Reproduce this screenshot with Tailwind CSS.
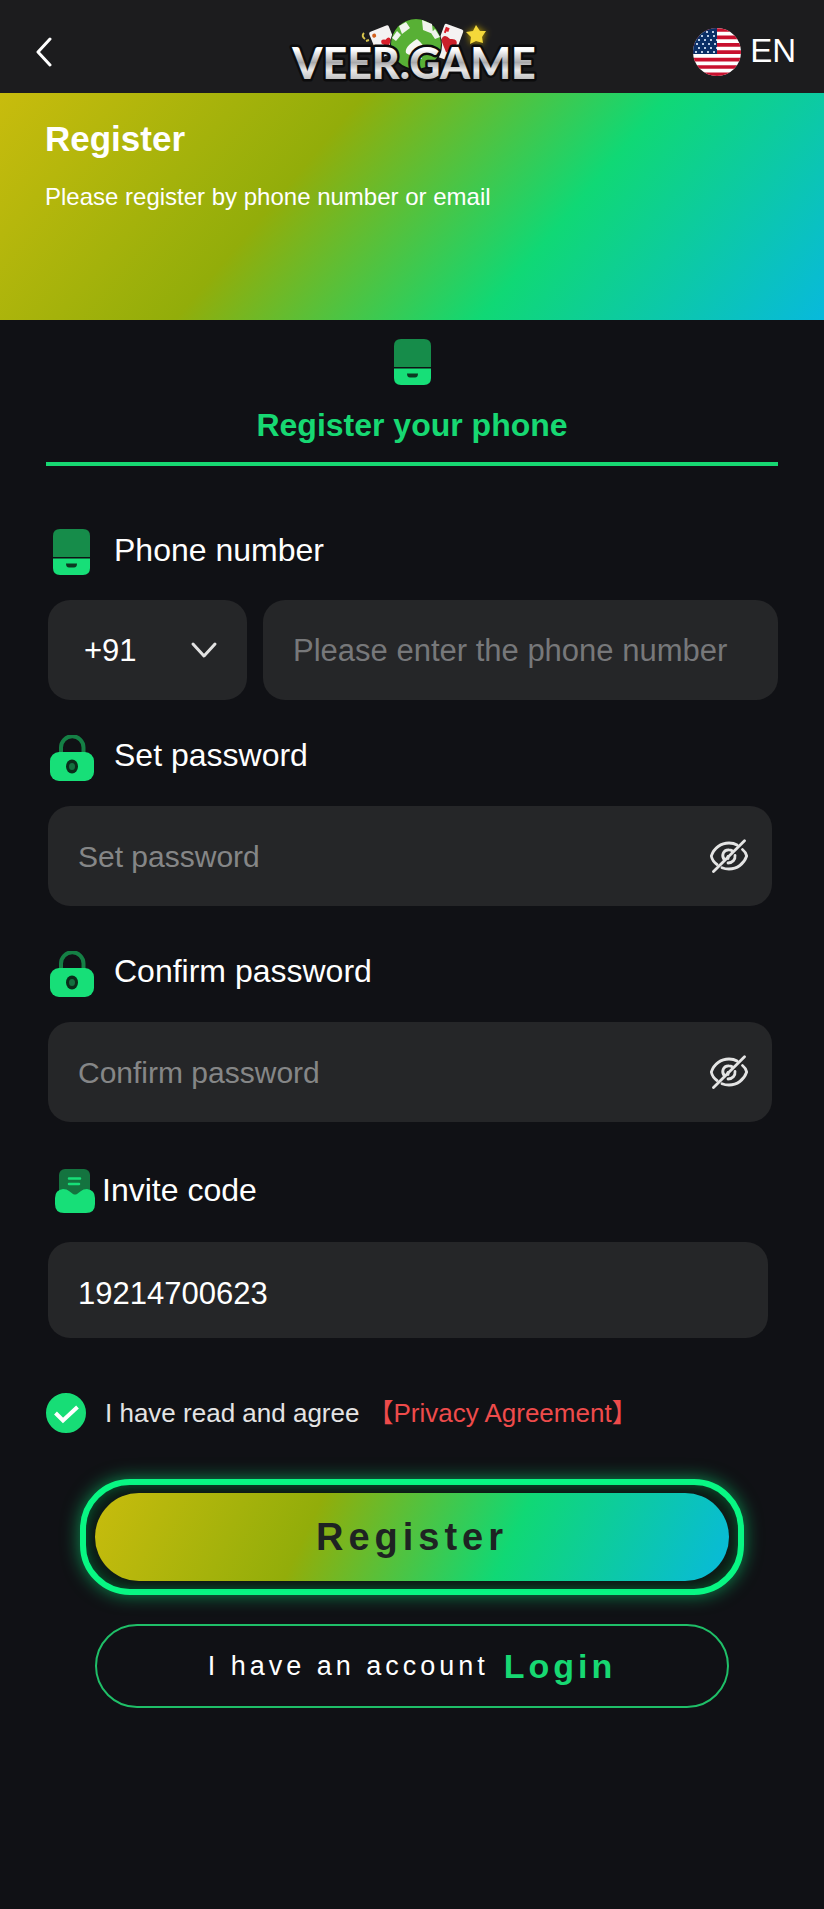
<!DOCTYPE html>
<html lang="en">
<head>
    <meta charset="UTF-8">
    <meta name="viewport" content="width=device-width, initial-scale=1">
    <title>Register - VEER.GAME</title>
    <script src="https://cdn.jsdelivr.net/npm/@tailwindcss/browser@4"></script>
</head>
<body class="min-h-screen bg-[#101115] text-white font-['Liberation_Sans',Arial,sans-serif]">
    <!-- Shared icons -->
    <svg class="hidden">
        <symbol id="icon-phone" viewBox="0 0 37 46">
            <path d="M7 0H30Q37 0 37 7V28H0V7Q0 0 7 0Z" fill="#168c4a"/>
            <path d="M0 29.500H37V39Q37 46 30 46H7Q0 46 0 39Z" fill="#17df78"/>
            <path d="M13 34.500H24Q24 38.500 21 38.500H16Q13 38.500 13 34.500Z" fill="#0c3a22"/>
        </symbol>
        <symbol id="icon-lock" viewBox="0 0 44 46">
            <path d="M11 18V12.500A11 11 0 0 1 33.500 12.500V18" fill="none" stroke="#158045" stroke-width="4"/>
            <rect y="17" width="44" height="29" rx="9" fill="#17df78"/>
            <ellipse cx="22" cy="31.500" rx="6" ry="7" fill="#0a2c1a"/>
            <ellipse cx="22" cy="31.500" rx="3" ry="3.500" fill="#14703f"/>
        </symbol>
        <symbol id="icon-invite" viewBox="0 0 40 44">
            <rect x="4" width="31" height="34" rx="6" fill="#14733f"/>
            <path d="M8 20Q12 20 14 22L18 25Q20 26 22 25L26 22Q28 20 32 20Q40 21 40 29V35Q40 44 31 44H9Q0 44 0 35V29Q0 21 8 20Z" fill="#17df78"/>
            <path d="M14 9.500H25M14 15H24" stroke="#17df78" stroke-width="2.500" stroke-linecap="round"/>
        </symbol>
        <symbol id="icon-eye-off" viewBox="0 0 38 34">
            <g fill="none" stroke="#e4e4e4" stroke-width="2.800" stroke-linecap="round">
                <path d="M7 25.500C4 23.500 2 20.500 1.300 17C4 9 11 4 19 4C22 4 25 4.700 27 6"/>
                <path d="M32.500 10.500C34.500 12 36 14.500 36.700 17C34 25 27 30 19 30C16.500 30 14 29.500 12 28.700"/>
                <path d="M14.500 21C11 17 13 10.500 19 10.800C20.500 10.800 21.500 11.300 22.500 12"/>
                <path d="M25 16.500C25.500 20.500 22.500 24 18 24"/>
                <path d="M18 17.500V19.500"/>
                <path d="M3.500 32.500L34.500 1.800"/>
            </g>
        </symbol>
    </svg>

    <header class="flex h-[93px] items-center justify-between bg-[#1c1c1e] pt-[10px] pr-7 pl-8">
        <div class="flex flex-1">
            <button type="button" aria-label="Back" class="p-1">
                <svg class="h-8 w-4" viewBox="0 0 16 32" fill="none" stroke="#fff" stroke-width="3" stroke-linecap="round" stroke-linejoin="round">
                    <path d="M14 3L2 16L14 29"/>
                </svg>
            </button>
        </div>
        <svg class="h-[76px] w-[270px] self-end" viewBox="-10 -4 270 76" role="img" aria-label="VEER.GAME">
            <defs>
                <linearGradient id="silver" x1="0" y1="0" x2="0" y2="1">
                    <stop offset="0.250" stop-color="#fff"/>
                    <stop offset="0.500" stop-color="#a9a9ab"/>
                    <stop offset="0.650" stop-color="#e9e9e9"/>
                    <stop offset="0.850" stop-color="#bdbdbd"/>
                </linearGradient>
                <filter id="glow" x="-1" y="-1" width="3" height="3"><feGaussianBlur stdDeviation="3"/></filter>
            </defs>
            <!-- Playing cards -->
            <g transform="rotate(-22 93 18)">
                <rect x="83" y="7" width="21" height="28" rx="2" fill="#f4f2f2"/>
                <circle cx="87" cy="12" r="2" fill="#d2601e"/>
                <path d="M96 28L91 22Q91 17 96 20Q101 17 101 22Z" fill="#d81f2a"/>
            </g>
            <g transform="rotate(20 161 18)">
                <rect x="151" y="5" width="20" height="34" rx="2" fill="#f4f2f2"/>
                <path d="M154 8v6M156 8v4" stroke="#d81f2a" stroke-width="2"/>
                <path d="M162 32L153 22Q153 14 161 18Q169 14 169 22Z" fill="#c9202a"/>
            </g>
            <!-- Poker chip -->
            <circle cx="127" cy="24" r="26" fill="#101210"/>
            <circle cx="127" cy="23" r="25" fill="#58b035"/>
            <path d="M110 5L117 1L121 7L113 13ZM133 -1L143 3L144 13L134 9ZM103 17L108 10L112 14L107 20ZM146 8L151 16L146 18L142 12Z" fill="#f0f4ec"/>
            <path d="M128 18Q115 26 117 32Q122 36 125 32L123 38H133L130 31Q135 34 136 29Q135 24 128 18Z" fill="#f5f7f3"/>
            <!-- Sparkles -->
            <path d="M188 4L191 10L198 11L193 16L194 24L187 20L180 23L182 16L177 11L184 10Z" fill="#b79a10" filter="url(#glow)"/>
            <path d="M187 4L191 10L197 10L193 16L194 22L187 20L181 23L182 16L177 11L184 10Z" fill="#f4d83a"/>
            <path d="M75 12Q72 15 76 18M77 20L80 19" stroke="#d8c54c" stroke-width="2" fill="none"/>
            <text x="125" y="58" text-anchor="middle" font-family="Lato, sans-serif" font-weight="900" font-size="43" fill="url(#silver)" stroke="#0c0c0d" stroke-width="5" stroke-linejoin="round" paint-order="stroke">VEER.GAME</text>
        </svg>
        <div class="flex flex-1 justify-end">
            <button type="button" class="flex items-start gap-[9px] text-[33px] leading-[46px]">
                <svg class="size-12" viewBox="0 0 48 48" aria-hidden="true">
                    <clipPath id="round"><circle cx="24" cy="24" r="24"/></clipPath>
                    <g clip-path="url(#round)">
                        <rect width="48" height="48" fill="#fff"/>
                        <path d="M0 2H48M0 9.400H48M0 16.800H48M0 24.200H48M0 31.600H48M0 39H48M0 46.400H48" stroke="#c8102e" stroke-width="3.700"/>
                        <rect width="24" height="26" fill="#0a2f66"/>
                        <path d="M13 4H24M8 8H24M5 12H24M3 16H24M5 20H24M2 24H24" stroke="#b9cbe4" stroke-width="2" stroke-dasharray="2 4"/>
                    </g>
                </svg>
                EN
            </button>
        </div>
    </header>

    <section class="h-[227px] bg-[linear-gradient(130deg,#c8bc0d_0%,#92ad0a_36%,#10d875_66%,#08b9dc_100%)] px-[45px] pt-[26px]">
        <h1 class="text-[35px] leading-10 font-bold">Register</h1>
        <p class="mt-[18px] text-2xl leading-10">Please register by phone number or email</p>
    </section>

    <form class="px-[46px]">
        <!-- Tab -->
        <div class="flex flex-col items-center border-b-4 border-[#17d872] pt-[19px] pb-[17px] text-[#17d872]">
            <svg class="h-[46px] w-[37px]"><use href="#icon-phone"/></svg>
            <h2 class="mt-5 text-[32px] leading-10 font-bold">Register your phone</h2>
        </div>

        <div class="pl-[2px]">
            <div class="mt-[63px] flex items-start">
                <svg class="mr-6 ml-[5px] h-[46px] w-[37px]"><use href="#icon-phone"/></svg>
                <label for="phone" class="text-[32px] leading-[42px]">Phone number</label>
            </div>
            <div class="mt-[25px] flex gap-4">
                <div class="grid w-[199px] items-center">
                    <select aria-label="Country code" class="col-start-1 row-start-1 h-[100px] appearance-none rounded-[22px] bg-[#252628] pt-[2px] pl-9 text-[31px]">
                        <option>+91</option>
                    </select>
                    <svg class="pointer-events-none col-start-1 row-start-1 mr-[29px] h-5 w-7 justify-self-end" viewBox="0 0 28 20" fill="none" stroke="#e2e2e2" stroke-width="3" stroke-linecap="round" stroke-linejoin="round">
                        <path d="M3 4L14 16L25 4"/>
                    </svg>
                </div>
                <input id="phone" type="tel" placeholder="Please enter the phone number" class="h-[100px] min-w-0 flex-1 rounded-[22px] bg-[#252628] px-[30px] pt-[2px] text-[31px] placeholder:text-[#77787a]">
            </div>

            <div class="mt-[35px] flex items-start">
                <svg class="mr-5 ml-[2px] h-[46px] w-[44px]"><use href="#icon-lock"/></svg>
                <label for="password" class="text-[32px] leading-10">Set password</label>
            </div>
            <div class="mt-[25px] mr-[6px] flex h-[100px] items-center rounded-[22px] bg-[#252628] pr-6 pl-[30px]">
                <input id="password" type="password" placeholder="Set password" class="h-full min-w-0 flex-1 pt-[2px] text-[30px] placeholder:text-[#858687]">
                <button type="button" aria-label="Show password"><svg class="h-[34px] w-[38px]"><use href="#icon-eye-off"/></svg></button>
            </div>

            <div class="mt-[45px] flex items-start">
                <svg class="mr-5 ml-[2px] h-[46px] w-[44px]"><use href="#icon-lock"/></svg>
                <label for="confirm" class="text-[32px] leading-10">Confirm password</label>
            </div>
            <div class="mt-[25px] mr-[6px] flex h-[100px] items-center rounded-[22px] bg-[#252628] pr-6 pl-[30px]">
                <input id="confirm" type="password" placeholder="Confirm password" class="h-full min-w-0 flex-1 pt-[2px] text-[30px] placeholder:text-[#858687]">
                <button type="button" aria-label="Show password"><svg class="h-[34px] w-[38px]"><use href="#icon-eye-off"/></svg></button>
            </div>

            <div class="mt-[47px] flex items-start">
                <svg class="mr-[7px] ml-[7px] h-[44px] w-[40px]"><use href="#icon-invite"/></svg>
                <label for="invite" class="text-[32px] leading-[42px]">Invite code</label>
            </div>
            <div class="mt-[29px] mr-[10px] flex">
                <input id="invite" type="text" value="19214700623" class="h-24 min-w-0 flex-1 rounded-[22px] bg-[#252628] px-[30px] pt-[8px] text-[31px]">
            </div>
        </div>

        <div class="mt-[55px] flex items-center text-[26px] leading-10">
            <div class="mr-[19px] grid">
                <input id="agree" type="checkbox" checked class="peer col-start-1 row-start-1 size-10 appearance-none rounded-full border-2 border-[#17dd76] checked:bg-[#17dd76]">
                <svg class="pointer-events-none invisible col-start-1 row-start-1 size-10 peer-checked:visible" viewBox="0 0 40 40" fill="none" stroke="#fff" stroke-width="4">
                    <path d="M9.500 20L17 27.500L31.500 14"/>
                </svg>
            </div>
            <label for="agree" class="text-[#e4e4e4]">I have read and agree</label>
            <a href="#" class="ml-2 font-['Liberation_Sans','Noto_Sans_CJK_SC',sans-serif] text-[#ee4b4b]">【Privacy Agreement】</a>
        </div>

        <div class="mx-[34px] mt-[46px] rounded-[50px] border-[6px] border-[#08f783] bg-[#0c2419] px-[9px] py-2 shadow-[0_0_18px_rgba(8,247,131,0.55),inset_0_0_10px_rgba(8,247,131,0.25)]">
            <button type="submit" class="h-[88px] w-full rounded-[44px] bg-[linear-gradient(115deg,#c8bc0d_0%,#92ad0a_34%,#10d875_65%,#08b9dc_100%)] text-[38px] font-bold tracking-[5px] text-[#1e2322] shadow-[0_0_8px_#101115]">Register</button>
        </div>
        <a href="#" class="mx-[49px] mt-[29px] flex h-[84px] items-center justify-center gap-[15px] rounded-[42px] border-2 border-[#1fbf68] text-[27px] tracking-[4px]">
            I have an account <span class="text-[34px] font-bold text-[#17d872]">Login</span>
        </a>
    </form>
</body>
</html>
